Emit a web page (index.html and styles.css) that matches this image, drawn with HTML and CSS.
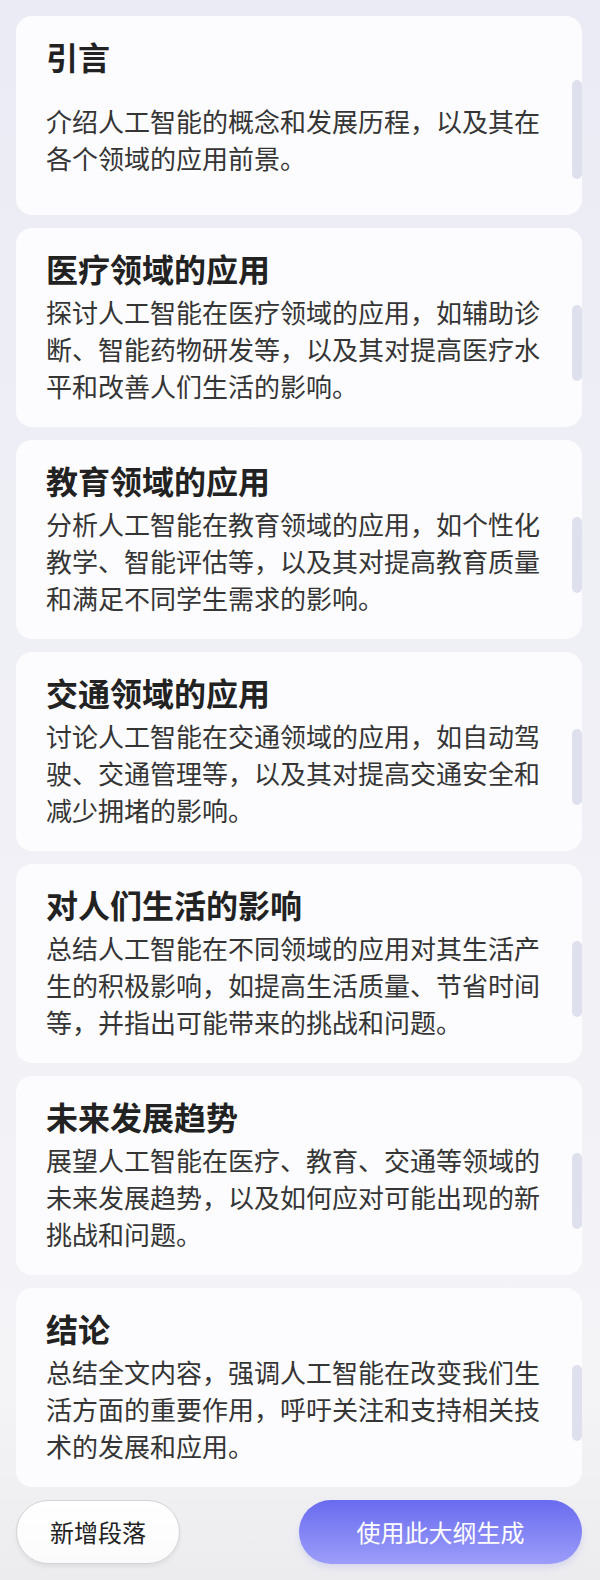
FILE: index.html
```html
<!DOCTYPE html>
<html lang="zh-CN">
<head>
<meta charset="utf-8">
<title>大纲</title>
<link rel="stylesheet" href="styles.css">
</head>
<body>
<main class="page">
  <section class="list">
    <article class="card card-first">
      <div class="card-body">
        <h2 class="card-title">引言</h2>
        <p class="card-desc">介绍人工智能的概念和发展历程，以及其在各个领域的应用前景。</p>
      </div>
      <div class="thumb"></div>
    </article>
    <article class="card">
      <div class="card-body">
        <h2 class="card-title">医疗领域的应用</h2>
        <p class="card-desc">探讨人工智能在医疗领域的应用，如辅助诊断、智能药物研发等，以及其对提高医疗水平和改善人们生活的影响。</p>
      </div>
      <div class="thumb"></div>
    </article>
    <article class="card">
      <div class="card-body">
        <h2 class="card-title">教育领域的应用</h2>
        <p class="card-desc">分析人工智能在教育领域的应用，如个性化教学、智能评估等，以及其对提高教育质量和满足不同学生需求的影响。</p>
      </div>
      <div class="thumb"></div>
    </article>
    <article class="card">
      <div class="card-body">
        <h2 class="card-title">交通领域的应用</h2>
        <p class="card-desc">讨论人工智能在交通领域的应用，如自动驾驶、交通管理等，以及其对提高交通安全和减少拥堵的影响。</p>
      </div>
      <div class="thumb"></div>
    </article>
    <article class="card">
      <div class="card-body">
        <h2 class="card-title">对人们生活的影响</h2>
        <p class="card-desc">总结人工智能在不同领域的应用对其生活产生的积极影响，如提高生活质量、节省时间等，并指出可能带来的挑战和问题。</p>
      </div>
      <div class="thumb"></div>
    </article>
    <article class="card">
      <div class="card-body">
        <h2 class="card-title">未来发展趋势</h2>
        <p class="card-desc">展望人工智能在医疗、教育、交通等领域的未来发展趋势，以及如何应对可能出现的新挑战和问题。</p>
      </div>
      <div class="thumb"></div>
    </article>
    <article class="card">
      <div class="card-body">
        <h2 class="card-title">结论</h2>
        <p class="card-desc">总结全文内容，强调人工智能在改变我们生活方面的重要作用，呼吁关注和支持相关技术的发展和应用。</p>
      </div>
      <div class="thumb"></div>
    </article>
  </section>
  <footer class="actions">
    <button class="btn btn-secondary" type="button">新增段落</button>
    <button class="btn btn-primary" type="button">使用此大纲生成</button>
  </footer>
</main>
</body>
</html>
```

FILE: styles.css
```css
* {
  box-sizing: border-box;
}

html,
body {
  margin: 0;
  padding: 0;
}

body {
  width: 600px;
  min-height: 1580px;
  background: linear-gradient(180deg, #ebebf5 0%, #f0f0f6 50%, #f4f4f7 88%, #ececef 100%);
  font-family: "Noto Sans CJK SC", "Noto Sans", sans-serif;
  color: #222;
}

.page {
  padding: 16px 18px 16px 16px;
  display: flex;
  flex-direction: column;
  gap: 13px;
}

.list {
  display: flex;
  flex-direction: column;
  gap: 13px;
}

.card {
  height: 199px;
  border-radius: 16px;
  background: #fcfcfe;
  display: flex;
  overflow: hidden;
}

.card-body {
  flex: 1;
  min-width: 0;
  padding: 18px 26px 0 30px;
}

.card-title {
  margin: 0;
  font-size: 32px;
  line-height: 44px;
  font-weight: 700;
  color: #222;
}

.card-desc {
  margin: 3px 0 0;
  font-size: 26px;
  line-height: 37px;
  font-weight: 400;
  color: #353535;
}

.card-first .card-desc {
  margin-top: 24px;
}

.thumb {
  flex: none;
  width: 10px;
  height: 76px;
  margin-top: 77px;
  border-radius: 5px;
  background: #dfe0ee;
}

.card-first .thumb {
  height: 99px;
  margin-top: 64px;
}

.actions {
  display: flex;
  justify-content: space-between;
  align-items: center;
}

.btn {
  height: 64px;
  border-radius: 32px;
  font-family: "Noto Sans CJK SC", "Noto Sans", sans-serif;
  font-size: 24px;
  line-height: 1;
  padding: 0;
  cursor: pointer;
}

.btn-secondary {
  width: 164px;
  border: 1.5px solid #d3d3d5;
  background: linear-gradient(180deg, #ffffff 0%, #fbfbfc 100%);
  color: #222;
  box-shadow: 0 3px 4px rgba(0, 0, 0, 0.06);
}

.btn-primary {
  width: 283px;
  border: none;
  background: linear-gradient(180deg, #696bef 0%, #9c9df9 100%);
  color: #fff;
  box-shadow: 0 4px 6px rgba(120, 120, 230, 0.18);
}
```
